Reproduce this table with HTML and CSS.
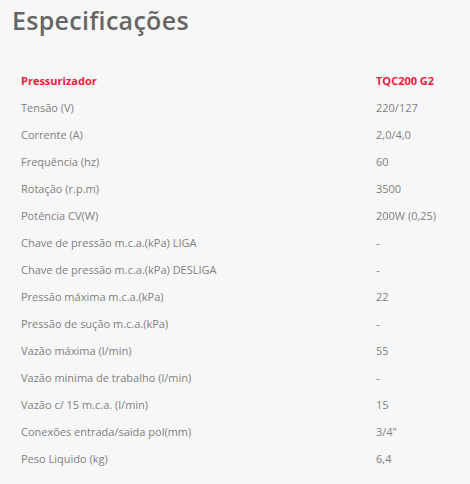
FILE: index.html
```html
<!DOCTYPE html>
<html lang="pt">
<head>
<meta charset="utf-8">
<link rel="stylesheet" href="styles.css">
</head>
<body>
<div class="page">
  <h2 class="title">Especificações</h2>
  <div class="specs">
    <div class="row head"><span class="label">Pressurizador</span><span class="value">TQC200 G2</span></div>
    <div class="row"><span class="label">Tensão (V)</span><span class="value">220/127</span></div>
    <div class="row"><span class="label">Corrente (A)</span><span class="value">2,0/4,0</span></div>
    <div class="row"><span class="label">Frequência (hz)</span><span class="value">60</span></div>
    <div class="row"><span class="label">Rotação (r.p.m)</span><span class="value">3500</span></div>
    <div class="row"><span class="label">Potência CV(W)</span><span class="value">200W (0,25)</span></div>
    <div class="row"><span class="label">Chave de pressão m.c.a.(kPa) LIGA</span><span class="value">-</span></div>
    <div class="row"><span class="label">Chave de pressão m.c.a.(kPa) DESLIGA</span><span class="value">-</span></div>
    <div class="row"><span class="label">Pressão máxima m.c.a.(kPa)</span><span class="value">22</span></div>
    <div class="row"><span class="label">Pressão de sução m.c.a.(kPa)</span><span class="value">-</span></div>
    <div class="row"><span class="label">Vazão máxima (l/min)</span><span class="value">55</span></div>
    <div class="row"><span class="label">Vazão minima de trabalho (l/min)</span><span class="value">-</span></div>
    <div class="row"><span class="label">Vazão c/ 15 m.c.a. (l/min)</span><span class="value">15</span></div>
    <div class="row"><span class="label">Conexões entrada/saida pol(mm)</span><span class="value">3/4"</span></div>
    <div class="row"><span class="label">Peso Liquido (kg)</span><span class="value">6,4</span></div>
  </div>
</div>
</body>
</html>
```

FILE: styles.css
```css
html, body {
  margin: 0;
  padding: 0;
  background: #f7f7f7;
}
.page {
  width: 470px;
  height: 484px;
  background: #f7f7f7;
  font-family: "Open Sans", "Liberation Sans", sans-serif;
}
.title {
  margin: 0;
  padding: 4px 0 0 12px;
  height: 67px;
  box-sizing: border-box;
  font-size: 25px;
  line-height: 32px;
  font-weight: 600;
  color: #666666;
  letter-spacing: 0.3px;
}
.specs {
  display: flex;
  flex-direction: column;
}
.row {
  display: flex;
  height: 27px;
  align-items: center;
  font-size: 11px;
  color: #808080;
}
.label {
  width: 355px;
  padding-left: 21px;
}
.value {
  flex: 1;
}
.row.head {
  color: #ee1a3c;
  font-weight: 700;
}
```
